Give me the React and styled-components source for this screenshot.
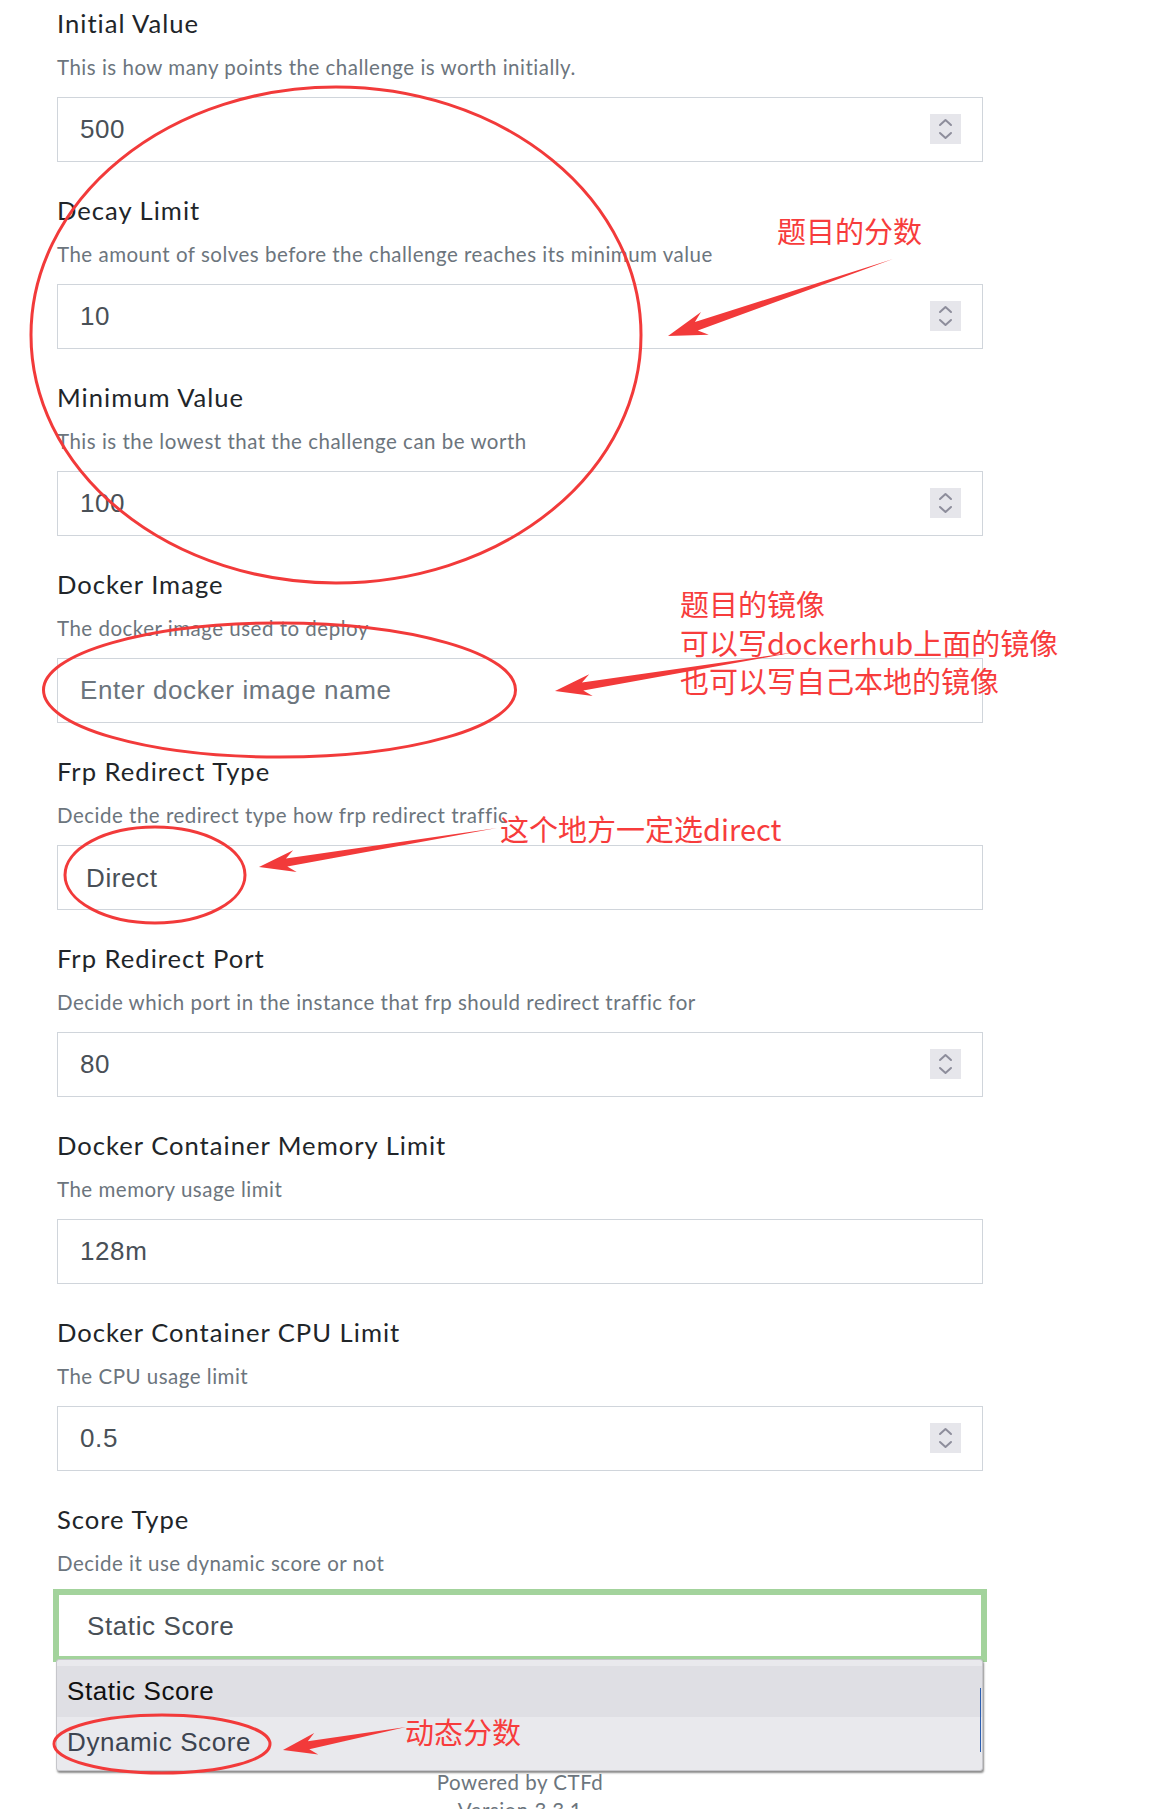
import React from "react";
import styled, { createGlobalStyle } from "styled-components";

const GlobalStyle = createGlobalStyle`
  html, body {
    margin: 0;
    padding: 0;
    background: #fff;
  }
  body {
    font-family: Lato, "Noto Sans", sans-serif;
  }
`;

const RED = "#f23a3a";

const Page = styled.div`
  position: relative;
  width: 1169px;
  min-height: 1809px;
  overflow: hidden;
`;

const Form = styled.form`
  width: 926px;
  margin-left: 57px;
  padding-top: 5px;
`;

const Field = styled.div`
  margin-bottom: 30px;
`;

const Label = styled.label`
  display: block;
  font-size: 25.6px;
  letter-spacing: 1px;
  line-height: 36px;
  color: #212529;
  margin-bottom: 12px;
`;

const Help = styled.small`
  display: block;
  font-size: 20.5px;
  letter-spacing: 0.5px;
  line-height: 28px;
  color: #6c757d;
  margin-bottom: 16px;
`;

const Control = styled.div`
  position: relative;
  height: 65px;
`;

const Input = styled.input`
  box-sizing: border-box;
  width: 100%;
  height: 65px;
  margin: 0;
  padding: 0 22px;
  border: 1px solid #d0d5db;
  border-radius: 0;
  background: #fff;
  font-family: "Liberation Sans", Arial, sans-serif;
  font-size: 26px;
  letter-spacing: 0.6px;
  color: #495057;
  outline: none;

  &::placeholder {
    color: #6c757d;
    opacity: 1;
  }
`;

const Select = styled.select`
  box-sizing: border-box;
  width: 100%;
  height: 65px;
  margin: 0;
  padding: 0 0 0 28px;
  appearance: none;
  -webkit-appearance: none;
  border: ${(p) => (p.$focused ? "2px solid #a3d39c" : "1px solid #d0d5db")};
  box-shadow: ${(p) => (p.$focused ? "0 0 0 4px #a3d39c" : "none")};
  border-radius: 0;
  background: #fff;
  font-family: "Liberation Sans", Arial, sans-serif;
  font-size: 26px;
  letter-spacing: 0.6px;
  color: #495057;
  outline: none;
`;

const Spinner = styled.span`
  position: absolute;
  right: 22px;
  top: 17px;
  width: 31px;
  height: 30px;
  background: #e6e6eb;
  display: flex;
  align-items: center;
  justify-content: center;
`;

const Menu = styled.ul`
  position: absolute;
  left: -1px;
  right: 0;
  top: calc(100% + 1px);
  margin: 0;
  padding: 6px 0 2px;
  list-style: none;
  background: #e9e9ed;
  border: 1px solid #c6c6cb;
  border-radius: 3px;
  box-shadow: 1px 2px 2px rgba(0, 0, 0, 0.45);
  z-index: 2;

  &::after {
    content: "";
    position: absolute;
    right: 1px;
    top: 28px;
    height: 64px;
    width: 1px;
    background: #2d5fb0;
  }
`;

const Option = styled.li`
  height: 51px;
  display: flex;
  align-items: center;
  padding-left: 10px;
  font-family: "Liberation Sans", Arial, sans-serif;
  font-size: 26px;
  letter-spacing: 0.6px;
  color: ${(p) => (p.$active ? "#111" : "#3d4450")};
  background: ${(p) => (p.$active ? "#dfdfe4" : "transparent")};
`;

const Footer = styled.footer`
  width: 926px;
  margin: 110px 0 0 57px;
  text-align: center;
  font-size: 20.5px;
  letter-spacing: 0.5px;
  line-height: 28px;
  color: #6c757d;
`;

const Overlay = styled.svg`
  position: absolute;
  left: 0;
  top: 0;
  pointer-events: none;
  z-index: 5;
`;

const Note = styled.div`
  position: absolute;
  left: ${(p) => p.$x}px;
  top: ${(p) => p.$y}px;
  font-family: "Noto Sans CJK SC", "Noto Sans", sans-serif;
  font-size: 29px;
  line-height: 38.5px;
  color: #f73c3c;
  white-space: nowrap;
  pointer-events: none;
  z-index: 6;
`;

const SpinIcon = () => (
  <svg width="31" height="30" viewBox="0 0 31 30">
    <polyline points="10,11 15.5,6 21,11" fill="none" stroke="#8d8d9b" strokeWidth="2" strokeLinecap="round" strokeLinejoin="round" />
    <polyline points="10,19 15.5,24 21,19" fill="none" stroke="#8d8d9b" strokeWidth="2" strokeLinecap="round" strokeLinejoin="round" />
  </svg>
);

const arrowPoints = (sx, sy, tx, ty, head, barb, neck) => {
  const dx = tx - sx;
  const dy = ty - sy;
  const len = Math.hypot(dx, dy);
  const ux = dx / len;
  const uy = dy / len;
  const nx = -uy;
  const ny = ux;
  const bx = tx - ux * head;
  const by = ty - uy * head;
  const cx = tx - ux * head * 1.3;
  const cy = ty - uy * head * 1.3;
  return [
    [sx, sy],
    [bx + nx * neck, by + ny * neck],
    [cx + nx * barb, cy + ny * barb],
    [tx, ty],
    [cx - nx * barb, cy - ny * barb],
    [bx - nx * neck, by - ny * neck],
  ]
    .map((p) => p.map((v) => v.toFixed(1)).join(","))
    .join(" ");
};

const circles = [
  { cx: 336, cy: 335, rx: 305, ry: 248 },
  { cx: 279.5, cy: 690, rx: 236, ry: 67 },
  { cx: 155, cy: 875, rx: 90, ry: 48 },
  { cx: 162, cy: 1744, rx: 108, ry: 29 },
];

const arrows = [
  [893, 259, 668, 336, 30, 12, 4.5],
  [796, 652, 555, 691, 28, 11, 4],
  [497, 828, 259, 867, 28, 11, 4],
  [406, 1727, 283, 1750, 26, 11, 4],
];

const Annotations = () => (
  <>
    <Overlay width="1169" height="1809" viewBox="0 0 1169 1809">
      {circles.map((c, i) => (
        <ellipse key={i} {...c} fill="none" stroke={RED} strokeWidth="3" />
      ))}
      {arrows.map((a, i) => (
        <polygon key={i} points={arrowPoints(...a)} fill={RED} />
      ))}
    </Overlay>
    <Note $x={777} $y={211}>题目的分数</Note>
    <Note $x={680} $y={584}>
      题目的镜像
      <br />
      可以写dockerhub上面的镜像
      <br />
      也可以写自己本地的镜像
    </Note>
    <Note $x={500} $y={809}>这个地方一定选direct</Note>
    <Note $x={405} $y={1712}>动态分数</Note>
  </>
);

const fields = [
  { label: "Initial Value", help: "This is how many points the challenge is worth initially.", value: "500", number: true },
  { label: "Decay Limit", help: "The amount of solves before the challenge reaches its minimum value", value: "10", number: true },
  { label: "Minimum Value", help: "This is the lowest that the challenge can be worth", value: "100", number: true },
  { label: "Docker Image", help: "The docker image used to deploy", placeholder: "Enter docker image name" },
  { label: "Frp Redirect Type", help: "Decide the redirect type how frp redirect traffic", select: ["Direct", "Proxy"] },
  { label: "Frp Redirect Port", help: "Decide which port in the instance that frp should redirect traffic for", value: "80", number: true },
  { label: "Docker Container Memory Limit", help: "The memory usage limit", value: "128m" },
  { label: "Docker Container CPU Limit", help: "The CPU usage limit", value: "0.5", number: true },
];

export default function App() {
  return (
    <Page>
      <GlobalStyle />
      <Form onSubmit={(e) => e.preventDefault()}>
        {fields.map((f) => (
          <Field key={f.label}>
            <Label>{f.label}</Label>
            <Help>{f.help}</Help>
            <Control>
              {f.select ? (
                <Select defaultValue={f.select[0]}>
                  {f.select.map((o) => (
                    <option key={o}>{o}</option>
                  ))}
                </Select>
              ) : (
                <Input type="text" defaultValue={f.value} placeholder={f.placeholder} />
              )}
              {f.number && (
                <Spinner>
                  <SpinIcon />
                </Spinner>
              )}
            </Control>
          </Field>
        ))}
        <Field>
          <Label>Score Type</Label>
          <Help>Decide it use dynamic score or not</Help>
          <Control>
            <Select $focused defaultValue="static">
              <option value="static">Static Score</option>
              <option value="dynamic">Dynamic Score</option>
            </Select>
            <Menu>
              <Option $active>Static Score</Option>
              <Option>Dynamic Score</Option>
            </Menu>
          </Control>
        </Field>
      </Form>
      <Footer>
        <div>Powered by CTFd</div>
        <div>Version 3.3.1</div>
      </Footer>
      <Annotations />
    </Page>
  );
}
